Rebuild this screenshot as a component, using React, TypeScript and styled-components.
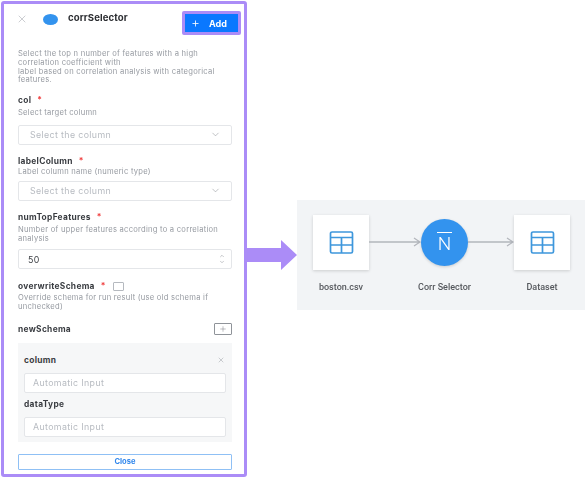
import styled, { createGlobalStyle } from 'styled-components';
import { Fragment } from 'react';
import { X, Plus, ChevronDown, ChevronUp } from 'lucide-react';

const GlobalStyle = createGlobalStyle`
  html, body {
    margin: 0;
    padding: 0;
    background: #fff;
    font-family: 'Inter', 'Liberation Sans', sans-serif;
  }
`;

const Page = styled.div`
  width: 588px;
  height: 478px;
  box-sizing: border-box;
  padding: 1px 0 0 1px;
  display: flex;
  overflow: hidden;
  filter: blur(0.35px);
`;

const Panel = styled.div`
  width: 246px;
  height: 476px;
  box-sizing: border-box;
  border: 3px solid #ab8cf7;
  border-radius: 3px;
  padding: 0 12px 0 14px;
  flex-shrink: 0;
  display: flex;
  flex-direction: column;
`;

const Header = styled.div`
  height: 34px;
  margin-top: 7px;
  display: flex;
  align-items: flex-start;
`;

const CloseIcon = styled(X)`
  color: #a9adb3;
  margin: 2px 0 0 -2px;
`;

const Dot = styled.span`
  width: 15px;
  height: 11px;
  margin: 3px 0 0 15px;
  border-radius: 50%;
  background: #3393ee;
`;

const Title = styled.span`
  margin: 1px 0 0 10px;
  font-size: 9.6px;
  line-height: 12px;
  font-weight: 700;
  letter-spacing: 0.1px;
  color: #2b2d31;
`;

const AddButton = styled.button`
  margin: 0 -9px 0 auto;
  width: 59px;
  height: 24px;
  box-sizing: border-box;
  border: 3px solid #ab8cf7;
  border-radius: 2px;
  background: #0a78ff;
  color: #fff;
  font: 700 9px 'Inter', sans-serif;
  display: flex;
  align-items: center;
  padding: 0 0 0 6px;
  gap: 9px;
`;

const Description = styled.p`
  margin: 5px 0 0;
  font-size: 7.6px;
  line-height: 8.8px;
  letter-spacing: 0.25px;
  color: #969aa1;
`;

const Label = styled.div<{ $top: number }>`
  margin-top: ${(p) => p.$top}px;
  font-size: 8.4px;
  line-height: 10px;
  font-weight: 700;
  letter-spacing: 0.3px;
  color: #3a3d42;
  display: flex;
  align-items: center;
`;

const Required = styled.span`
  color: #ef3b3b;
  margin-left: 6px;
`;

const Help = styled.div<{ $top: number }>`
  margin-top: ${(p) => p.$top}px;
  font-size: 7.6px;
  line-height: 8.8px;
  letter-spacing: 0.25px;
  color: #969aa1;
`;

const Field = styled.div<{ $top: number }>`
  margin-top: ${(p) => p.$top}px;
  height: 20px;
  box-sizing: border-box;
  border: 1px solid #e4e6e9;
  border-radius: 2px;
  background: #fff;
  display: flex;
  align-items: center;
  justify-content: space-between;
  padding: 0 10px 0 11px;
  font-size: 8.8px;
  letter-spacing: 0.38px;
  color: #b7bbc1;
`;

const AutoField = styled(Field)`
  padding-left: 8px;
`;

const Value = styled.span`
  color: #3a3d42;
  font-size: 8.8px;
  margin-left: -2px;
`;

const Stepper = styled.span`
  display: flex;
  flex-direction: column;
  color: #8d9197;
  margin-right: -4px;
`;

const CheckBox = styled.span`
  width: 9px;
  height: 7px;
  margin-left: 7px;
  border: 1px solid #b5b9bf;
  border-radius: 1px;
`;

const SchemaRow = styled.div`
  margin-top: 11px;
  display: flex;
  justify-content: space-between;
  align-items: center;
`;

const SchemaLabel = styled(Label)`
  margin-top: 0;
`;

const SquareButton = styled.span`
  width: 18px;
  height: 12px;
  box-sizing: border-box;
  border: 1px solid #8f9399;
  border-radius: 1px;
  display: flex;
  align-items: center;
  justify-content: center;
  color: #666a70;
`;

const SchemaCard = styled.div`
  margin-top: 8px;
  height: 99px;
  box-sizing: border-box;
  padding: 12px 6px 0;
  background: #f6f7f8;
`;

const CardHead = styled.div`
  display: flex;
  justify-content: space-between;
  align-items: center;
  padding-right: 1px;
  color: #8d9197;
`;

const CardLabel = styled(Label)`
  margin-top: 0;
`;

const Spaced = styled(CardLabel)`
  margin-top: 6px;
`;

const CloseButton = styled.button`
  margin-top: 12px;
  height: 16px;
  width: 100%;
  flex-shrink: 0;
  box-sizing: border-box;
  border: 1px solid #8fc0f5;
  border-radius: 1px;
  background: #fff;
  color: #2f86ec;
  font: 700 7.6px 'Inter', sans-serif;
`;

const Side = styled.div`
  margin-left: -3px;
  padding-top: 30px;
  display: flex;
  align-items: center;
`;

const BigArrow = styled.svg`
  display: block;
  flex-shrink: 0;
`;

const Diagram = styled.div`
  width: 288px;
  height: 110px;
  box-sizing: border-box;
  padding: 15px 16px;
  background: #f2f4f6;
  display: grid;
  grid-template-columns: 56px 52px 47px 46px 56px;
  grid-template-rows: 55px auto;
  row-gap: 9px;
  align-items: center;
`;

const NodeBox = styled.div`
  height: 55px;
  background: #fff;
  box-shadow: 0 1px 3px rgba(0, 0, 0, 0.16);
  display: flex;
  align-items: center;
  justify-content: center;
`;

const Circle = styled.div`
  height: 47px;
  border-radius: 50%;
  background: #3393ee;
  box-shadow: 0 1px 3px rgba(0, 0, 0, 0.16);
  display: flex;
  align-items: center;
  justify-content: center;
  color: #fff;
  font: 300 19px 'Roboto', sans-serif;
  line-height: 1;
`;

const Overlined = styled.span`
  border-top: 1px solid #fff;
  padding: 1px 1px 0;
`;

const NodeName = styled.span`
  justify-self: center;
  white-space: nowrap;
  font: 500 9px 'Roboto', sans-serif;
  color: #55585d;
`;

const TableIcon = () => (
  <svg width="25" height="25" viewBox="0 0 25 25" fill="none" stroke="#3e97dc" strokeWidth="1.7">
    <rect x="1.5" y="2" width="22" height="21" rx="1.5" />
    <path d="M1.5 7.5h22M1.5 15h22M12.5 7.5V23" />
  </svg>
);

const Connector = ({ width }: { width: number }) => (
  <svg width={width} height="12" viewBox={`0 0 ${width} 12`} fill="none" stroke="#b3b6bc" strokeWidth="1.3">
    <path d={`M0 6h${width - 1}M${width - 7} 2l6 4-6 4`} />
  </svg>
);

const App = () => {
  return (
    <Fragment>
      <GlobalStyle />
      <Page>
        <Panel>
          <Header>
            <CloseIcon size={12} strokeWidth={1.2} />
            <Dot />
            <Title>corrSelector</Title>
            <AddButton>
              <Plus size={9} strokeWidth={2.2} />
              Add
            </AddButton>
          </Header>
          <Description>
            Select the top n number of features with a high
            <br />
            correlation coefficient with
            <br />
            label based on correlation analysis with categorical
            <br />
            features.
          </Description>

          <Label $top={10}>
            col<Required>*</Required>
          </Label>
          <Help $top={4}>Select target column</Help>
          <Field $top={7}>
            Select the column
            <ChevronDown size={11} strokeWidth={1.2} color="#8d9197" />
          </Field>

          <Label $top={11}>
            labelColumn<Required>*</Required>
          </Label>
          <Help $top={2}>Label column name (numeric type)</Help>
          <Field $top={4}>
            Select the column
            <ChevronDown size={11} strokeWidth={1.2} color="#8d9197" />
          </Field>

          <Label $top={11}>
            numTopFeatures<Required>*</Required>
          </Label>
          <Help $top={4}>
            Number of upper features according to a correlation
            <br />
            analysis
          </Help>
          <Field $top={6}>
            <Value>50</Value>
            <Stepper>
              <ChevronUp size={6} strokeWidth={2} />
              <ChevronDown size={6} strokeWidth={2} />
            </Stepper>
          </Field>

          <Label $top={12}>
            overwriteSchema<Required>*</Required>
            <CheckBox />
          </Label>
          <Help $top={3}>
            Override schema for run result (use old schema if
            <br />
            unchecked)
          </Help>

          <SchemaRow>
            <SchemaLabel $top={0}>newSchema</SchemaLabel>
            <SquareButton>
              <Plus size={8} strokeWidth={1.3} />
            </SquareButton>
          </SchemaRow>

          <SchemaCard>
            <CardHead>
              <CardLabel $top={0}>column</CardLabel>
              <X size={8} strokeWidth={1.3} />
            </CardHead>
            <AutoField $top={8}>Automatic Input</AutoField>
            <Spaced $top={6}>dataType</Spaced>
            <AutoField $top={8}>Automatic Input</AutoField>
          </SchemaCard>

          <CloseButton>Close</CloseButton>
        </Panel>

        <Side>
          <BigArrow width="53" height="30" viewBox="0 0 53 30">
            <path d="M0 8h37V0l16 15-16 15v-8H0z" fill="#ab8cf7" />
          </BigArrow>
          <Diagram>
            <NodeBox>
              <TableIcon />
            </NodeBox>
            <Connector width={52} />
            <Circle>
              <Overlined>N</Overlined>
            </Circle>
            <Connector width={46} />
            <NodeBox>
              <TableIcon />
            </NodeBox>
            <NodeName>boston.csv</NodeName>
            <span />
            <NodeName>Corr Selector</NodeName>
            <span />
            <NodeName>Dataset</NodeName>
          </Diagram>
        </Side>
      </Page>
    </Fragment>
  );
};

export default App;
